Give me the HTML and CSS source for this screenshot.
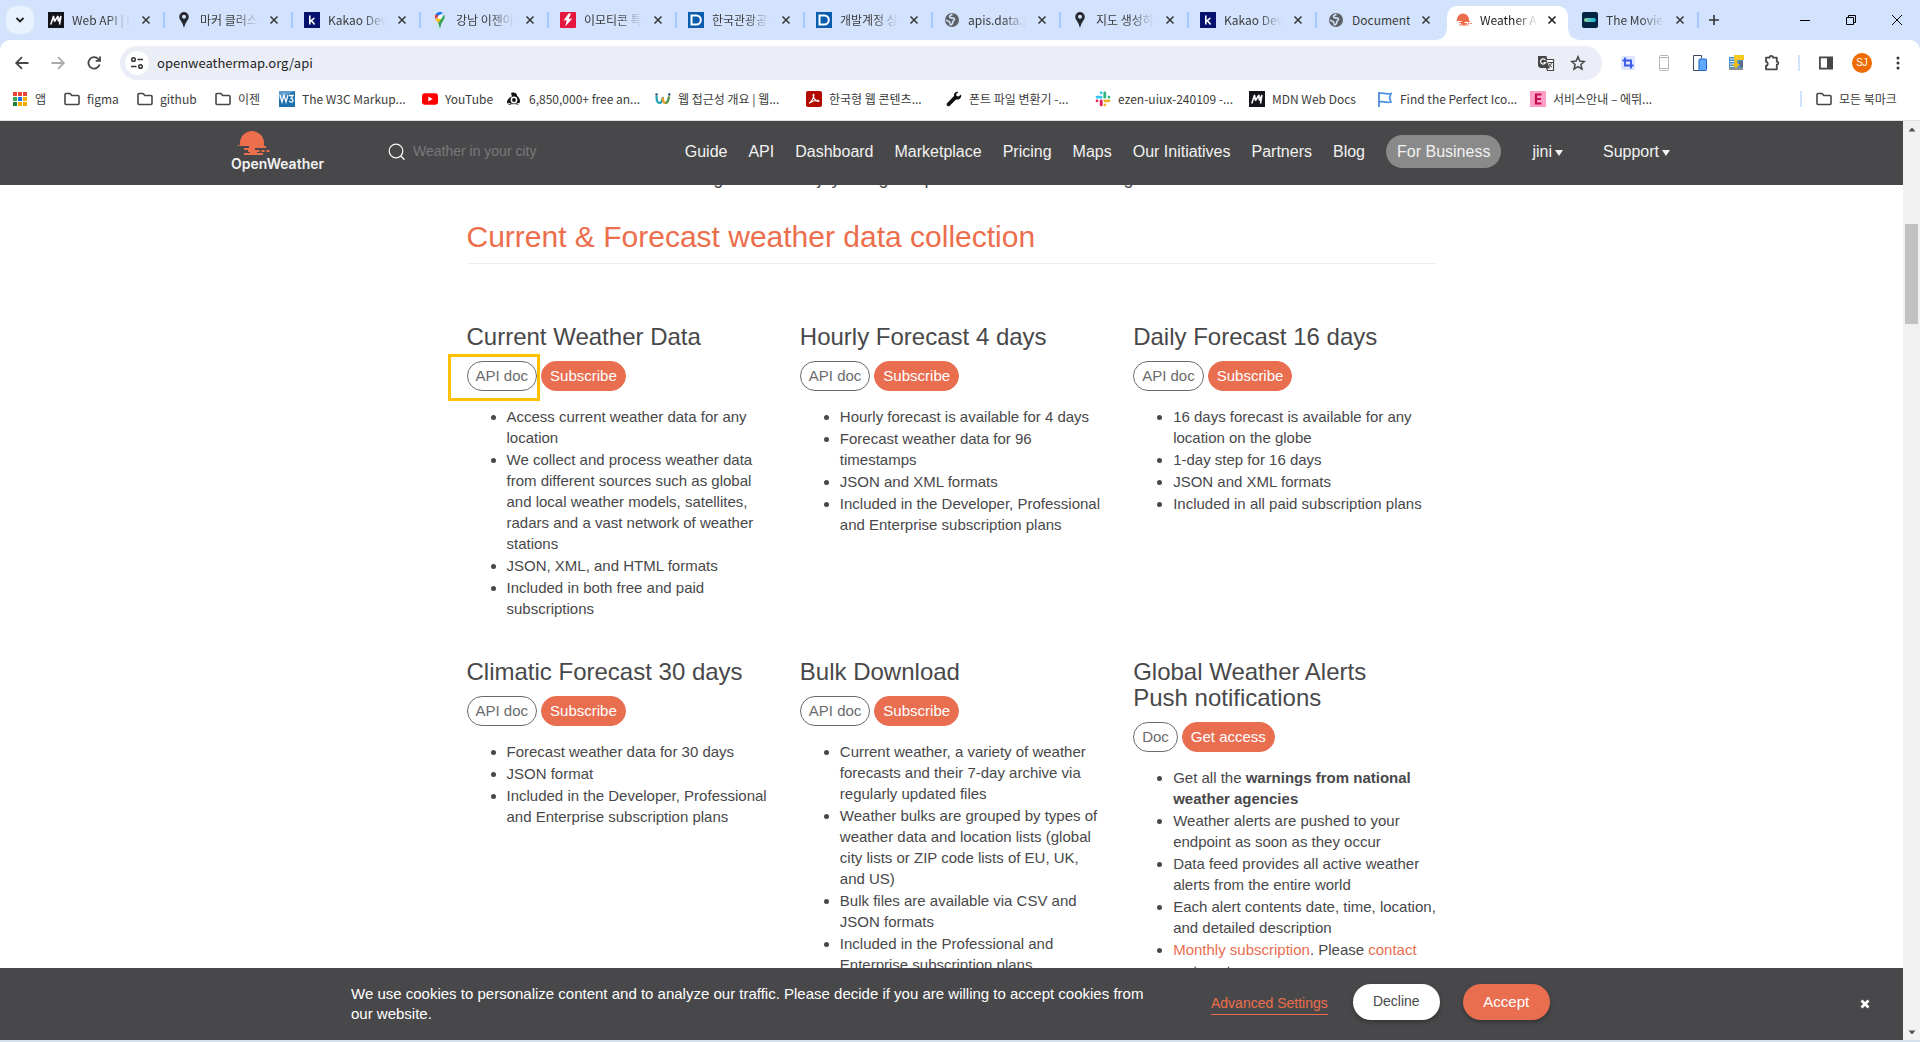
FILE: index.html
```html
<!DOCTYPE html>
<html lang="en">
<head>
<meta charset="utf-8">
<title>Weather API - OpenWeatherMap</title>
<link rel="stylesheet" href="styles.css">
</head>
<body>
<svg class="sprite" aria-hidden="true">
  <symbol id="close" viewBox="0 0 10 10"><path d="M1.5 1.5l7 7M8.500 1.500l-7 7" stroke="currentColor" stroke-width="1.600" fill="none"/></symbol>
  <symbol id="pin" viewBox="0 0 16 16"><path d="M8 0a4.800 4.800 0 0 0-4.800 4.800C3.200 8 6.500 10 8 16c1.500-6 4.800-8 4.800-11.200A4.800 4.800 0 0 0 8 0zm0 2.800a2 2 0 1 1 0 4 2 2 0 0 1 0-4z" fill="#28292c" fill-rule="evenodd"/></symbol>
  <symbol id="kakao" viewBox="0 0 16 16"><path d="M0 0h16v16H0z" fill="#04116d"/><path d="M5.800 3.500v9M10.400 6L6.300 9.400M7.300 8.600l3.300 3.900" stroke="#fff" stroke-width="1.600" fill="none"/></symbol>
  <symbol id="mdn" viewBox="0 0 16 16"><path d="M0 0h16v16H0z" fill="#15141a"/><path d="M2.800 12.500l2.700-8.500 1 5.500L10 4l.3 5.500L13 4l-1.500 8.500" stroke="#fff" stroke-width="1.500" fill="none" stroke-linejoin="bevel"/></symbol>
  <symbol id="dportal" viewBox="0 0 16 16"><path d="M0 0h16v16H0z" fill="#0b5cad"/><path d="M3.500 3.500h4.800a4.500 4.500 0 0 1 0 9H3.500z" stroke="#fff" stroke-width="2" fill="none"/></symbol>
  <symbol id="globe" viewBox="0 0 16 16"><circle cx="8" cy="8" r="7" fill="#5f6368"/><path d="M8.500 2.200c-2 .8-3.800 1.800-2.500 3.200 1.500 1.500 4-.2 4.500 1.600.3 1.400-1.500 1.300-1.600 2.600-.1 1.800-1.300 3.600-2.400 3.200-.8-.4-.2-2-1-2.800-.9-.9-2.600-.8-3.300-2.300" stroke="#d3e3fd" stroke-width="1.500" fill="none"/></symbol>
  <symbol id="folder" viewBox="0 0 16 16"><path d="M1 3.500c0-.6.300-1 1-1h4l1.800 2H14c.7 0 1 .4 1 1V12.500c0 .6-.3 1-1 1H2c-.7 0-1-.4-1-1z" stroke="#474747" stroke-width="1.600" fill="none" stroke-linejoin="round"/></symbol>
  <symbol id="sun" viewBox="0 0 32 26"><path d="M2 15V12a12 12 0 0 1 24 0v3h2v2H17v2h4v2h-2v1h6v2H6v-2h6v-1h-2v-2h-4v-2h5v-2H0v-2z" fill="#ec6e4c"/><path d="M18.500 20h3m2 0h3m2 0h3" stroke="#ec6e4c" stroke-width="2"/></symbol>
</svg>

<header class="browser">
  <nav class="tabstrip" aria-label="Tabs">
    <button class="tab-search" aria-label="Search tabs"><svg class="i10" viewBox="0 0 10 10"><path d="M1.500 3l3.500 3.500L8.500 3" stroke="#1f1f1f" stroke-width="1.800" fill="none"/></svg></button>
    <div class="tab"><svg class="i16"><use href="#mdn"/></svg><span class="tab-title">Web API | MDN</span><button class="tab-close" aria-label="Close"><svg class="i10"><use href="#close"/></svg></button></div>
    <div class="tab"><svg class="i16"><use href="#pin"/></svg><span class="tab-title">마커 클러스터러</span><button class="tab-close" aria-label="Close"><svg class="i10"><use href="#close"/></svg></button></div>
    <div class="tab"><svg class="i16"><use href="#kakao"/></svg><span class="tab-title">Kakao Developers</span><button class="tab-close" aria-label="Close"><svg class="i10"><use href="#close"/></svg></button></div>
    <div class="tab"><svg class="i16" viewBox="0 0 16 16"><path d="M8 0C5.200 0 3 2.100 3 5l2.500.3L8 2.500 11 .9A5 5 0 0 0 8 0z" fill="#1a73e8"/><path d="M3.600 2.200A5 5 0 0 0 3 5c0 .8.200 1.600.6 2.300L6.600 3.900z" fill="#ea4335"/><path d="M6.500 6.200L3.600 7.300C4.300 8.600 5.400 9.700 6.200 11L10 6z" fill="#fbbc04"/><path d="M12.400 2.500C13.700 7 10.500 9 9.300 12 8.800 13.500 8.800 16 8 16s-.8-3-1.800-5z" fill="#34a853"/><circle cx="8" cy="5" r="1.900" fill="#fff"/></svg><span class="tab-title">강남 이젠아카데미</span><button class="tab-close" aria-label="Close"><svg class="i10"><use href="#close"/></svg></button></div>
    <div class="tab"><svg class="i16" viewBox="0 0 16 16"><rect width="16" height="16" rx="1" fill="#e5173f"/><path d="M8.500 1.500L3.500 8.700l3.200-.7-1.400 6.500 7-8-3.600.6 2.300-5.600z" fill="#fff"/></svg><span class="tab-title">이모티콘 특수문자</span><button class="tab-close" aria-label="Close"><svg class="i10"><use href="#close"/></svg></button></div>
    <div class="tab"><svg class="i16"><use href="#dportal"/></svg><span class="tab-title">한국관광공사</span><button class="tab-close" aria-label="Close"><svg class="i10"><use href="#close"/></svg></button></div>
    <div class="tab"><svg class="i16"><use href="#dportal"/></svg><span class="tab-title">개발계정 상세보기</span><button class="tab-close" aria-label="Close"><svg class="i10"><use href="#close"/></svg></button></div>
    <div class="tab"><svg class="i16"><use href="#globe"/></svg><span class="tab-title">apis.data.go.kr</span><button class="tab-close" aria-label="Close"><svg class="i10"><use href="#close"/></svg></button></div>
    <div class="tab"><svg class="i16"><use href="#pin"/></svg><span class="tab-title">지도 생성하기</span><button class="tab-close" aria-label="Close"><svg class="i10"><use href="#close"/></svg></button></div>
    <div class="tab"><svg class="i16"><use href="#kakao"/></svg><span class="tab-title">Kakao Developers</span><button class="tab-close" aria-label="Close"><svg class="i10"><use href="#close"/></svg></button></div>
    <div class="tab tab-last"><svg class="i16"><use href="#globe"/></svg><span class="tab-title tab-title-full">Document</span><button class="tab-close" aria-label="Close"><svg class="i10"><use href="#close"/></svg></button></div>
    <div class="tab tab-active"><svg class="i16"><use href="#sun"/></svg><span class="tab-title">Weather API</span><button class="tab-close" aria-label="Close"><svg class="i10"><use href="#close"/></svg></button></div>
    <div class="tab"><svg class="i16" viewBox="0 0 16 16"><defs><linearGradient id="tm"><stop offset="0" stop-color="#8ed29c"/><stop offset="1" stop-color="#12b3e0"/></linearGradient></defs><rect width="16" height="16" rx="2" fill="#032541"/><rect x="2" y="6" width="12" height="4" rx="2" fill="url(#tm)"/></svg><span class="tab-title">The Movie Database</span><button class="tab-close" aria-label="Close"><svg class="i10"><use href="#close"/></svg></button></div>
    <button class="new-tab" aria-label="New tab"><svg class="i12" viewBox="0 0 12 12"><path d="M6 1v10M1 6h10" stroke="#333" stroke-width="1.600"/></svg></button>
    <div class="window-buttons">
      <button aria-label="Minimize"><svg class="i12" viewBox="0 0 12 12"><path d="M1 6.500h10" stroke="#000"/></svg></button>
      <button aria-label="Restore"><svg class="i12" viewBox="0 0 12 12"><path d="M1.500 3.500h7v7h-7zM3.500 3.500v-2h7v7h-2" stroke="#000" fill="none"/></svg></button>
      <button aria-label="Close window"><svg class="i12" viewBox="0 0 12 12"><path d="M1 1l10 10M11 1L1 11" stroke="#000"/></svg></button>
    </div>
  </nav>

  <div class="toolbar">
    <button class="tool" aria-label="Back"><svg class="i16" viewBox="0 0 16 16"><path d="M14.500 8H2.500M8 2.200L2.200 8 8 13.800" stroke="#474747" stroke-width="1.800" fill="none"/></svg></button>
    <button class="tool" aria-label="Forward"><svg class="i16" viewBox="0 0 16 16"><path d="M1.500 8h12M8 2.200L13.800 8 8 13.800" stroke="#a9a9a9" stroke-width="1.800" fill="none"/></svg></button>
    <button class="tool" aria-label="Reload"><svg class="i16" viewBox="0 0 16 16"><path d="M13.600 9.500A5.700 5.700 0 1 1 12.300 4L14 5.700M14 1.500v4.300H9.700" stroke="#474747" stroke-width="1.800" fill="none"/></svg></button>
    <div class="omnibox">
      <button class="site-info" aria-label="Site information"><svg class="i16" viewBox="0 0 16 16"><circle cx="4.500" cy="4.500" r="1.800" stroke="#333" stroke-width="1.500" fill="none"/><circle cx="11.500" cy="11.500" r="1.800" stroke="#333" stroke-width="1.500" fill="none"/><path d="M8.500 4.500H14M2 11.500h5.500" stroke="#333" stroke-width="1.700"/></svg></button>
      <input class="url" type="text" aria-label="Address" value="openweathermap.org/api">
      <button class="omni-tool" aria-label="Translate"><svg class="i18" viewBox="0 0 18 18"><path d="M1 2h8.500l3 12H3L1 12z" fill="#474747"/><path d="M8.500 5.500H16.500V16.500H10.500L9.500 14H12z" fill="#fff" stroke="#474747" stroke-width="1.200"/><path d="M8.300 6A2.600 2.600 0 1 0 8.500 8.500H6.500" stroke="#fff" fill="none" stroke-width="1.200"/><path d="M11 8.500h5M14.500 8.500c-.3 2-1.500 3.500-2.500 4.500M11.800 9.500c.6 1.600 1.700 2.700 3.200 3.800" stroke="#474747" fill="none"/></svg></button>
      <button class="omni-tool" aria-label="Bookmark"><svg class="i16" viewBox="0 0 16 16"><path d="M8 1.800l1.800 4.300 4.600.4-3.500 3 1.100 4.600-4-2.500-4 2.500 1.100-4.600-3.500-3 4.600-.4z" stroke="#474747" stroke-width="1.500" fill="none"/></svg></button>
    </div>
    <button class="tool" aria-label="Capture"><svg class="i16" viewBox="0 0 16 16"><rect x="1" y="1" width="14" height="14" rx="2" fill="#dfe4ff"/><path d="M5 2.500v8h8.500M2.500 5.500H11v8" stroke="#3b5be8" stroke-width="1.900" fill="none"/></svg></button>
    <button class="tool" aria-label="Mobile"><svg class="i16" viewBox="0 0 16 16"><rect x="3.500" y=".5" width="9" height="15" rx="1" fill="#fff" stroke="#b5b5b5"/><path d="M4 2.500h8M4 13.500h8" stroke="#b5b5b5"/></svg></button>
    <button class="tool" aria-label="Devices"><svg class="i16" viewBox="0 0 16 16"><path d="M1.500 15.500V.5h8" stroke="#3b4b66" fill="none"/><path d="M1.500 15.500H7M9.500.5v3" stroke="#3b4b66"/><rect x="7" y="4" width="7.500" height="11.500" rx="1" fill="#62a8ff" stroke="#1c63c7"/></svg></button>
    <button class="tool" aria-label="Page capture"><svg class="i16" viewBox="0 0 16 16"><rect x="1" y="2" width="14" height="11" fill="#4d8fc9"/><path d="M2 4h7M2 6.500h5M2 9h6M2 11.500h4" stroke="#dcebf7"/><path d="M1 13h14v2H1z" fill="#8b9097"/><path d="M11 6h4v6h-3z" fill="#556b86"/><path d="M6 0h10v5H6z" fill="#f7c81e"/><path d="M6.500 5h3v4h2.500l-4 4.500L4 9h2.500z" fill="#f1bd12"/></svg></button>
    <button class="tool" aria-label="Extensions"><svg class="i16" viewBox="0 0 16 16"><path d="M2 2.700h3.500a1.500 1.500 0 0 1 3.500 0h3.800v4a1.500 1.500 0 0 1 0 3v4.600H2v-3.600c2.300 0 2.300-4 0-4z" stroke="#474747" stroke-width="1.800" fill="none" stroke-linejoin="round"/></svg></button>
    <span class="divider"></span>
    <button class="tool" aria-label="Side panel"><svg class="i16" viewBox="0 0 16 16"><rect x="1.900" y="2.400" width="12.200" height="11.200" stroke="#474747" stroke-width="1.800" fill="none"/><path d="M9 2h5v12H9z" fill="#474747"/></svg></button>
    <button class="tool" aria-label="Profile"><span class="avatar">SJ</span></button>
    <button class="tool" aria-label="Menu"><svg class="i16" viewBox="0 0 16 16"><circle cx="8" cy="3" r="1.500" fill="#333"/><circle cx="8" cy="8" r="1.500" fill="#333"/><circle cx="8" cy="13" r="1.500" fill="#333"/></svg></button>
  </div>

  <nav class="bookmarks" aria-label="Bookmarks">
    <a href="#"><svg class="i16" viewBox="0 0 16 16"><path d="M1 1h4v4H1zM6 1h4v4H6zM11 1h4v4h-4z" fill="#ea4335"/><path d="M1 6h4v4H1z" fill="#34a853"/><path d="M6 6h4v4H6z" fill="#1a73e8"/><path d="M11 6h4v4h-4zM6 11h4v4H6zM11 11h4v4h-4z" fill="#f9ab00"/><path d="M1 11h4v4H1z" fill="#188038"/><path d="M5.500 0v16M10.500 0v16M0 5.500h16M0 10.500h16" stroke="#fff"/></svg>앱</a>
    <a href="#"><svg class="i16"><use href="#folder"/></svg>figma</a>
    <a href="#"><svg class="i16"><use href="#folder"/></svg>github</a>
    <a href="#"><svg class="i16"><use href="#folder"/></svg>이젠</a>
    <a href="#"><svg class="i16" viewBox="0 0 16 16"><path d="M0 0h16v16H0z" fill="#1d6fae"/><path d="M0 0h16L0 8z" fill="#5d9ccb"/><path d="M1 4l2 7 2-7 2 7 2-7M10 4.500h4l-2 3c3 0 2.500 4-.3 3.500l-1.700-.8" stroke="#fff" stroke-width="1.300" fill="none"/></svg>The W3C Markup...</a>
    <a href="#"><svg class="i16" viewBox="0 0 16 16"><rect y="2.300" width="16" height="11.400" rx="3" fill="#f00"/><path d="M6.300 5.500v5L10.700 8z" fill="#fff"/></svg>YouTube</a>
    <a href="#"><svg class="i16" viewBox="0 0 16 16"><path d="M5 2c3-1 6 0 6 2.500l2 2.500c2 3 1 7-2 7H5c-4 0-5-3-3-5.500C3 7 4 6 6 5.500z" fill="#111"/><circle cx="8" cy="9" r="3.400" fill="#fff"/><circle cx="8" cy="9" r="1.900" fill="#111"/><path d="M2 12c3 2 8 2 12 0" stroke="#fff" fill="none"/></svg>6,850,000+ free an...</a>
    <a href="#"><svg class="i16" viewBox="0 0 16 16"><path d="M1.500 5c0 5 1.500 7 3 7S7.500 9 8 6" stroke="#1e9fb0" stroke-width="2.200" fill="none"/><path d="M7.500 6.500c.5 4 1.500 5.500 3 5.500S13.500 9 14 5.500" stroke="#f29a1f" stroke-width="2.200" fill="none"/><path d="M10.500 12c2-.5 3-3 3.500-6.500" stroke="#3a9b57" stroke-width="2" fill="none"/><circle cx="1.500" cy="3.500" r="1.200" fill="#174c74"/><circle cx="14.300" cy="3.500" r="1.200" fill="#174c74"/></svg>웹 접근성 개요 | 웹...</a>
    <a href="#"><svg class="i16" viewBox="0 0 16 16"><rect width="16" height="16" rx="2" fill="#b30b00"/><path d="M3 12.300c1.500-.8 5-5 4.900-8.400-.1-1-.9-1-.8.300.2 3 3 6.100 5.200 6.300 1 0 .8-1.200-.4-1.200-2.800 0-6 1-8.900 3z" stroke="#fff" stroke-width="1.100" fill="none"/></svg>한국형 웹 콘텐츠...</a>
    <a href="#"><svg class="i16" viewBox="0 0 16 16"><path d="M15 3.500l-2.500 2-2-.5-.3-2L12.500 1C10 .3 7.500 2 8 5L.8 12.500c-.7 2 1 3.500 2.700 2.500L10 8.500c3.500.7 6-2 5-5z" fill="#111"/></svg>폰트 파일 변환기 -...</a>
    <a href="#"><svg class="i16" viewBox="0 0 16 16"><g fill="none" stroke-width="2.800" stroke-linecap="round"><path d="M6.200 1.800h0M2 6.200h4.200" stroke="#36c5f0"/><path d="M9.800 2v4.200M14 6.200h0" stroke="#2eb67d"/><path d="M9.800 9.800H14M9.800 14h0" stroke="#ecb22e"/><path d="M6.200 9.800V14M2 9.800h0" stroke="#e01e5a"/></g></svg>ezen-uiux-240109 -...</a>
    <a href="#"><svg class="i16"><use href="#mdn"/></svg>MDN Web Docs</a>
    <a href="#"><svg class="i16" viewBox="0 0 16 16"><path d="M2 1v15" stroke="#2f6fd0" stroke-width="1.500"/><path d="M2 2.500c4-1.500 6 1.500 12 0L12.500 7l1.500 4c-6 1.500-8-1.500-12 0" stroke="#4a8fe0" stroke-width="1.700" fill="none"/></svg>Find the Perfect Ico...</a>
    <a href="#"><svg class="i16" viewBox="0 0 16 16"><path d="M0 0h16v16H0z" fill="#ff9ec6"/><path d="M11.500 3.500H6v9h5.500M6 8h5" stroke="#c2104f" stroke-width="2.200" fill="none"/></svg>서비스안내 – 에뛰...</a>
    <span class="spacer"></span>
    <span class="divider"></span>
    <a href="#"><svg class="i16"><use href="#folder"/></svg>모든 북마크</a>
  </nav>
</header>

<div class="viewport">
  <div class="site">
    <header class="site-header">
      <a class="logo" href="#" aria-label="OpenWeather"><svg class="logo-sun"><use href="#sun"/></svg><span class="logo-name">OpenWeather</span></a>
      <form class="search">
        <label for="city" aria-label="Search"><svg class="i18" viewBox="0 0 18 18"><circle cx="8" cy="9" r="6.800" stroke="#fff" stroke-width="1.200" fill="none"/><path d="M12.800 14l3.700 3.700" stroke="#fff" stroke-width="1.300"/></svg></label>
        <input id="city" type="text" placeholder="Weather in your city">
      </form>
      <nav class="menu">
        <a href="#">Guide</a><a href="#">API</a><a href="#">Dashboard</a><a href="#">Marketplace</a><a href="#">Pricing</a><a href="#">Maps</a><a href="#">Our Initiatives</a><a href="#">Partners</a><a href="#">Blog</a><a class="business" href="#">For Business</a>
        <button class="drop">jini<span class="caret"></span></button>
        <button class="drop">Support<span class="caret"></span></button>
      </nav>
    </header>

    <main class="content">
      <p class="intro">Start working fast and enjoy using our products at no extra charge for all our clients.</p>
      <h2>Current &amp; Forecast weather data collection</h2>
      <div class="products">
        <section>
          <h3>Current Weather Data</h3>
          <div class="actions highlighted"><a class="doc" href="#">API doc</a><a class="sub" href="#">Subscribe</a></div>
          <ul>
            <li>Access current weather data for any location</li>
            <li>We collect and process weather data from different sources such as global and local weather models, satellites, radars and a vast network of weather stations</li>
            <li>JSON, XML, and HTML formats</li>
            <li>Included in both free and paid subscriptions</li>
          </ul>
        </section>
        <section>
          <h3>Hourly Forecast 4 days</h3>
          <div class="actions"><a class="doc" href="#">API doc</a><a class="sub" href="#">Subscribe</a></div>
          <ul>
            <li>Hourly forecast is available for 4 days</li>
            <li>Forecast weather data for 96 timestamps</li>
            <li>JSON and XML formats</li>
            <li>Included in the Developer, Professional and Enterprise subscription plans</li>
          </ul>
        </section>
        <section>
          <h3>Daily Forecast 16 days</h3>
          <div class="actions"><a class="doc" href="#">API doc</a><a class="sub" href="#">Subscribe</a></div>
          <ul>
            <li>16 days forecast is available for any location on the globe</li>
            <li>1-day step for 16 days</li>
            <li>JSON and XML formats</li>
            <li>Included in all paid subscription plans</li>
          </ul>
        </section>
        <section>
          <h3>Climatic Forecast 30 days</h3>
          <div class="actions"><a class="doc" href="#">API doc</a><a class="sub" href="#">Subscribe</a></div>
          <ul>
            <li>Forecast weather data for 30 days</li>
            <li>JSON format</li>
            <li>Included in the Developer, Professional and Enterprise subscription plans</li>
          </ul>
        </section>
        <section>
          <h3>Bulk Download</h3>
          <div class="actions"><a class="doc" href="#">API doc</a><a class="sub" href="#">Subscribe</a></div>
          <ul>
            <li>Current weather, a variety of weather forecasts and their 7-day archive via regularly updated files</li>
            <li>Weather bulks are grouped by types of weather data and location lists (global city lists or ZIP code lists of EU, UK, and US)</li>
            <li>Bulk files are available via CSV and JSON formats</li>
            <li>Included in the Professional and Enterprise subscription plans</li>
          </ul>
        </section>
        <section>
          <h3>Global Weather Alerts<br>Push notifications</h3>
          <div class="actions"><a class="doc" href="#">Doc</a><a class="sub" href="#">Get access</a></div>
          <ul>
            <li>Get all the <strong>warnings from national weather agencies</strong></li>
            <li>Weather alerts are pushed to your endpoint as soon as they occur</li>
            <li>Data feed provides all active weather alerts from the entire world</li>
            <li>Each alert contents date, time, location, and detailed description</li>
            <li><a href="#">Monthly subscription</a>. Please <a href="#">contact</a> us to get access</li>
          </ul>
        </section>
      </div>
    </main>

    <div class="cookies" role="dialog" aria-label="Cookies">
      <p>We use cookies to personalize content and to analyze our traffic. Please decide if you are willing to accept cookies from our website.</p>
      <a class="advanced" href="#">Advanced Settings</a>
      <button class="decline">Decline</button>
      <button class="accept">Accept</button>
      <button class="dismiss" aria-label="Dismiss"><svg class="i10" viewBox="0 0 10 10"><path d="M1.500 1.500l7 7M8.500 1.500l-7 7" stroke="#fff" stroke-width="2.800"/></svg></button>
    </div>
  </div>
  <div class="scrollbar" aria-hidden="true">
    <svg class="i16" viewBox="0 0 16 16"><path d="M4.500 10.500h7L8 6.500z" fill="#505050"/></svg>
    <div class="track"><div class="thumb"></div></div>
    <svg class="i16" viewBox="0 0 16 16"><path d="M4.500 6.500h7L8 10.500z" fill="#505050"/></svg>
  </div>
</div>
<footer class="taskbar-edge"></footer>
</body>
</html>
```
FILE: styles.css
```css
*, ::before, ::after { box-sizing: border-box; }

body {
  margin: 0;
  height: 100vh;
  display: flex;
  flex-direction: column;
  overflow: hidden;
  background: #fff;
  color: #48484a;
  font: 15px/21px "Liberation Sans", Arial, sans-serif;
}

button, input { font: inherit; color: inherit; background: none; border: 0; padding: 0; margin: 0; outline: 0; }
button { display: flex; align-items: center; justify-content: center; flex: none; }
a { color: inherit; text-decoration: none; }
svg { display: block; flex: none; }
h2, h3, p, ul { margin: 0; padding: 0; font-weight: 400; }

.sprite { width: 0; height: 0; position: absolute; }
.i10 { width: 10px; height: 10px; }
.i12 { width: 12px; height: 12px; }
.i16 { width: 16px; height: 16px; }
.i18 { width: 18px; height: 18px; }

/* Browser frame */
.browser {
  flex: none;
  background: #d3e3fd;
  border-bottom: 1px solid #dfe2e0;
  font: 12px/16px "Noto Sans CJK KR", sans-serif;
  color: #3c3c3c;
}

.tabstrip { display: flex; height: 40px; padding-left: 6px; }
.tab-search { width: 28px; height: 28px; margin: 6px 3px 0 0; border-radius: 10px; background: #e9f0fe; }
.tab {
  flex: 0 1 128px;
  min-width: 0;
  display: flex;
  align-items: center;
  padding-left: 11px;
  position: relative;
}
.tab::after {
  content: "";
  width: 2px;
  height: 16px;
  margin-left: auto;
  background: #a8c7fa;
}
.tab-title {
  flex: none;
  width: 58px;
  margin-left: 8px;
  overflow: hidden;
  white-space: nowrap;
  mask-image: linear-gradient(to right, #000 60%, transparent);
}
.tab-title-full { mask-image: none; }
.tab-close { width: 20px; height: 20px; margin-left: 6px; }
.tab-last::after { background: none; }
.tab-active { flex-basis: 126px; z-index: 1; color: #1f1f1f; }
.tab-active .tab-close { margin-left: 4px; }
.tab-active::before {
  content: "";
  position: absolute;
  inset: 6px 3px 0 2px;
  z-index: -1;
  border-radius: 10px 10px 0 0;
  background: #fff;
}
/* Curved feet of the active tab */
.tab-active::after {
  position: absolute;
  inset: auto -7px 0 -8px;
  width: auto;
  height: 10px;
  background:
    radial-gradient(circle at 0 0, transparent 9px, #fff 10px) left / 10px 10px no-repeat,
    radial-gradient(circle at 100% 0, transparent 9px, #fff 10px) right / 10px 10px no-repeat;
}
.new-tab { width: 30px; height: 40px; }
.window-buttons { display: flex; margin-left: auto; }
.window-buttons button { width: 46px; height: 40px; }

.toolbar {
  display: flex;
  align-items: center;
  height: 40px;
  padding: 6px 4px 0;
  border-radius: 10px 10px 0 0;
  background: #fff;
}
.tool { width: 36px; height: 34px; }
.omnibox {
  flex: 1;
  display: flex;
  align-items: center;
  height: 34px;
  margin: 0 8px;
  padding: 0 8px 0 5px;
  border-radius: 17px;
  background: #ebeef7;
}
.site-info { width: 24px; height: 24px; border-radius: 50%; background: #fff; }
.url { flex: 1; margin-left: 8px; font-size: 13px; color: #1f1f1f; }
.omni-tool { width: 32px; height: 32px; }
.divider { flex: none; width: 2px; height: 16px; margin: 0 8px; background: #d3e3fd; }
.avatar {
  width: 20px;
  height: 20px;
  border-radius: 50%;
  background: #ef6c00;
  color: #fff;
  font: 10px/20px "Liberation Sans", sans-serif;
}

.bookmarks {
  display: grid;
  grid-template-columns: 52px 73px 78px 64px 143px 84px 149px 151px 140px 149px 154px 128px 153px 120px 1fr 24px 100px;
  align-items: center;
  height: 40px;
  padding: 0 4px 2px 12px;
  background: #fff;
}
.bookmarks a { display: flex; align-items: center; gap: 7px; white-space: nowrap; }

/* Page area */
.viewport { flex: 1; min-height: 0; display: flex; background: #fff; }
.site { flex: 1; min-width: 0; display: flex; flex-direction: column; }

.site-header {
  flex: none;
  display: flex;
  align-items: center;
  height: 64px;
  padding: 0 233px 4px 231px;
  background: #48484a;
  color: #f2f2f2;
  font-size: 16px;
}
.logo { display: flex; flex-direction: column; width: 94px; }
.logo-sun { width: 32px; height: 26px; margin-left: 7px; }
.logo-name { font: 600 14px/14px Inter, sans-serif; }
.search { display: flex; align-items: center; gap: 7px; margin-left: 63px; }
.search input { width: 180px; font-size: 14px; color: #fff; }
.search input::placeholder { color: #78787a; opacity: 1; }
.menu { display: flex; align-items: center; gap: 21px; margin-left: auto; white-space: nowrap; }
.business { height: 33px; padding: 0 11px; border-radius: 17px; background: #8a8a8a; line-height: 33px; }
.drop { gap: 3px; margin-left: 10px; }
.caret { border: 4px solid transparent; border-top: 6px solid #f2f2f2; border-bottom: 0; margin-top: 4px; }
.drop + .drop { margin-left: 19px; }

.content { flex: 1; min-height: 0; overflow: hidden; }
.intro { margin-top: -20px; font-size: 18px; line-height: 26px; text-align: center; }
.content h2 {
  width: 970px;
  margin: 29px auto 0;
  padding-bottom: 9px;
  border-bottom: 1px solid #eee;
  color: #ec6e4c;
  font-size: 30px;
  line-height: 34px;
}
.products {
  display: grid;
  grid-template-columns: repeat(3, 1fr);
  gap: 39px 30px;
  width: 970px;
  margin: 60px auto 0;
}
.products h3 { font-size: 24px; line-height: 26px; }
.actions { display: flex; gap: 4px; margin: 11px 0 15px; position: relative; }
.highlighted::before {
  content: "";
  position: absolute;
  inset: -7px auto auto -19px;
  width: 92px;
  height: 47px;
  border: 3px solid #ffc000;
}
.doc, .sub { height: 30px; padding: 0 8px; border: 1px solid #6b6b6d; border-radius: 15px; line-height: 28px; }
.doc { color: #6b6b6d; }
.sub { border-color: #e96e50; background: #e96e50; color: #fff; }
.products ul { padding-left: 40px; }
.products li { margin-bottom: 1px; }
.products li a { color: #e96e50; }

.cookies {
  flex: none;
  display: flex;
  align-items: center;
  height: 72px;
  padding: 0 28px 0 351px;
  background: #48484a;
  color: #fff;
}
.cookies p { flex: 0 1 810px; line-height: 20px; }
.advanced { margin-left: 50px; border-bottom: 1px solid #ec6e4c; color: #ec6e4c; font-size: 14px; }
.decline, .accept { width: 87px; height: 36px; margin-bottom: 5px; border-radius: 18px; box-shadow: 0 2px 4px rgba(0, 0, 0, .3); }
.decline { margin-left: 25px; background: #fff; color: #48484a; font-size: 14px; }
.accept { margin-left: 23px; background: #e96e50; }
.dismiss { width: 20px; height: 20px; margin-left: auto; }

.scrollbar { flex: none; width: 17px; display: flex; flex-direction: column; align-items: center; background: #f1f1f1; }
.track { flex: 1; width: 13px; padding-top: 87px; }
.thumb { height: 100px; background: #c1c1c1; }

.taskbar-edge { flex: none; height: 2px; background: #d3e2ea; }
```
